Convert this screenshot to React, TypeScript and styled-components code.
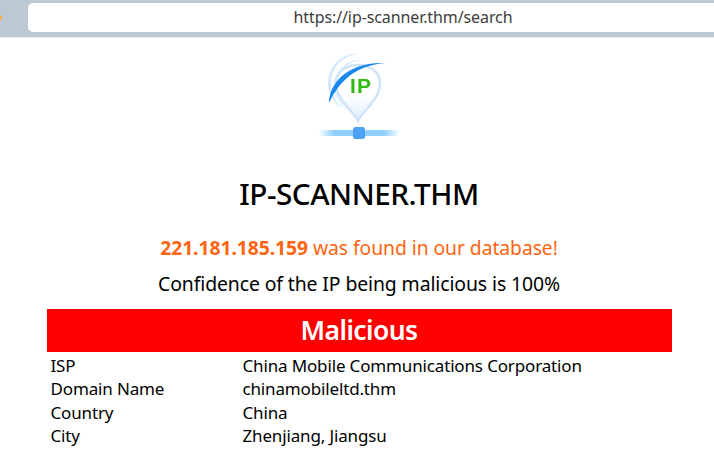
import React from "react";
import styled, { createGlobalStyle } from "styled-components";

const GlobalStyle = createGlobalStyle`
  html, body {
    margin: 0;
    padding: 0;
    background: #fff;
  }
  body {
    width: 714px;
    height: 462px;
    overflow: hidden;
    font-family: "Noto Sans", "Open Sans", sans-serif;
  }
`;

const Page = styled.div`
  width: 714px;
  height: 462px;
  overflow: hidden;
`;

const BrowserBar = styled.div`
  position: relative;
  height: 38px;
  box-sizing: border-box;
  padding: 3px 0 0 28px;
  background: #bcc8d3;
  border-bottom: 1px solid #eef1f3;
`;

const StatusDot = styled.span`
  position: absolute;
  left: -3px;
  top: 15px;
  width: 5px;
  height: 6px;
  border-radius: 50%;
  background: #f5b14f;
`;

const AddressBar = styled.div`
  height: 29px;
  margin-right: -8px;
  padding-left: 56px;
  border-radius: 5px;
  background: #fff;
  color: #3d3d3d;
  font-size: 16px;
  line-height: 29px;
  text-align: center;
  letter-spacing: -0.1px;
`;

const Content = styled.main`
  display: flex;
  flex-direction: column;
  align-items: center;
  padding-left: 4px;
`;

const Logo = styled.svg`
  display: block;
  margin-top: 12px;
  flex: none;
  filter: blur(0.35px);
`;

const Title = styled.h1`
  margin: 33px 0 0;
  color: #000;
  font-size: 29.7px;
  line-height: 38px;
  font-weight: 500;
  letter-spacing: -0.5px;
`;

const FoundLine = styled.p`
  margin: 22px 0 0;
  color: #ff6410;
  font-size: 19.3px;
  line-height: 26px;
  letter-spacing: -0.05px;
`;

const FoundIp = styled.strong`
  font-weight: 700;
`;

const Confidence = styled.p`
  margin: 10px 0 0;
  color: #000;
  font-size: 19.4px;
  line-height: 26px;
  letter-spacing: -0.1px;
`;

const Verdict = styled.div`
  width: 625px;
  height: 43px;
  margin: 12px 0 0;
  background: #ff0000;
  color: #fff;
  font-size: 26.5px;
  font-weight: 600;
  line-height: 43px;
  text-align: center;
  letter-spacing: -0.6px;
`;

const Details = styled.div`
  width: 625px;
  margin-top: 2px;
  display: grid;
  grid-template-columns: 192px 1fr;
  grid-auto-rows: 23.4px;
  padding-left: 4px;
  box-sizing: border-box;
  color: #000;
  font-size: 17px;
  line-height: 23.4px;
  letter-spacing: -0.15px;
`;

const Cell = styled.div`
  white-space: nowrap;
`;

const rows: [string, string][] = [
  ["ISP", "China Mobile Communications Corporation"],
  ["Domain Name", "chinamobileltd.thm"],
  ["Country", "China"],
  ["City", "Zhenjiang, Jiangsu"],
];

function IpLogo() {
  return (
    <Logo width="84" height="92" viewBox="-1 0 84 92">
      <defs>
        <linearGradient id="pinFill" x1="0" y1="0" x2="0" y2="1">
          <stop offset="0" stopColor="#ffffff" />
          <stop offset="0.55" stopColor="#ffffff" />
          <stop offset="1" stopColor="#dcecfd" />
        </linearGradient>
        <linearGradient id="baseLine" x1="0" y1="0" x2="1" y2="0">
          <stop offset="0" stopColor="#8fd0ff" stopOpacity="0" />
          <stop offset="0.2" stopColor="#8fd0ff" />
          <stop offset="0.8" stopColor="#8fd0ff" />
          <stop offset="1" stopColor="#8fd0ff" stopOpacity="0" />
        </linearGradient>
      </defs>
      {/* outer swooshes */}
      <path d="M24 58C8 48 5 24 20 11 26 6 33 3 40 4 31 5 24 9 19 15 9 28 12 47 24 58Z" fill="#cfe6fd" />
      <path d="M30 60C16 52 11 32 22 19 28 12 36 9 44 10 35 11 28 15 24 21 16 33 19 50 30 60Z" fill="#e2f0fe" />
      {/* pin */}
      <path
        d="M40 71C35 60 18 50 18 33 18 22 28 15 40 15 52 15 62 22 62 33 62 50 45 60 40 71Z"
        fill="url(#pinFill)"
        stroke="#cfe4fa"
        strokeWidth="2.5"
      />
      {/* blue arc */}
      <path d="M11 53C11 34 29 11 68 13 53 14 39 19 29 28 21 35 15 44 11 53Z" fill="#1b87f0" />
      <text x="32" y="42.5" fill="#2fbb12" fontSize="21" fontWeight="700" letterSpacing="1.2" fontFamily="'Liberation Sans', sans-serif">IP</text>
      {/* network base */}
      <rect x="0" y="80" width="82" height="6" rx="3" fill="url(#baseLine)" />
      <rect x="35" y="77" width="12" height="12" rx="2.5" fill="#4da2f8" />
    </Logo>
  );
}

export default function App() {
  return (
    <Page>
      <GlobalStyle />
      <BrowserBar>
        <StatusDot />
        <AddressBar>https://ip-scanner.thm/search</AddressBar>
      </BrowserBar>
      <Content>
        <IpLogo />
        <Title>IP-SCANNER.THM</Title>
        <FoundLine>
          <FoundIp>221.181.185.159</FoundIp> was found in our database!
        </FoundLine>
        <Confidence>Confidence of the IP being malicious is 100%</Confidence>
        <Verdict>Malicious</Verdict>
        <Details>
          {rows.map(([label, value]) => (
            <React.Fragment key={label}>
              <Cell>{label}</Cell>
              <Cell>{value}</Cell>
            </React.Fragment>
          ))}
        </Details>
      </Content>
    </Page>
  );
}
